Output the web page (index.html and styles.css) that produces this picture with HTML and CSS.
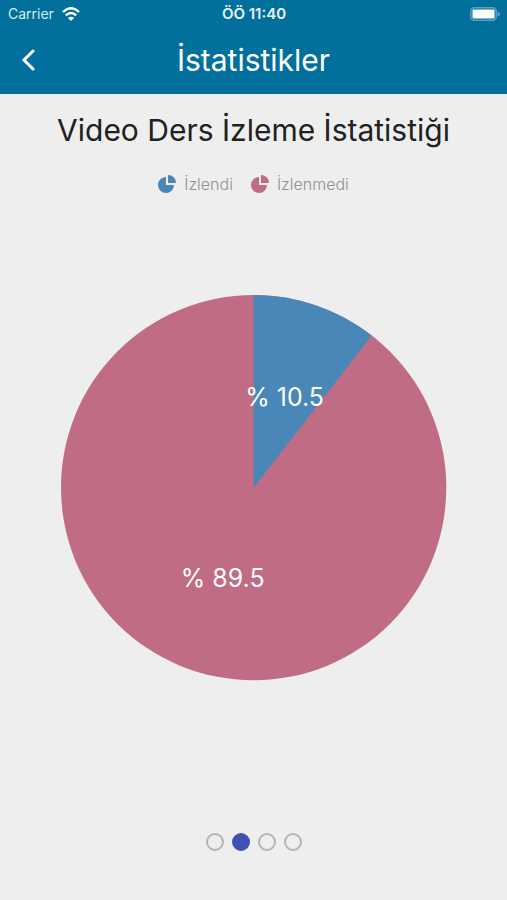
FILE: index.html
```html
<!DOCTYPE html>
<html lang="tr">
<head>
    <meta charset="UTF-8">
    <meta name="viewport" content="width=device-width, initial-scale=1.0">
    <title>İstatistikler</title>
    <link rel="stylesheet" href="styles.css">
</head>
<body>
    <header class="header">
        <div class="status-bar">
            <div class="carrier">
                <span>Carrier</span>
                <svg class="wifi" viewBox="0 0 18 14" aria-hidden="true">
                    <path d="M1 5 Q9 -2.6 17 5" />
                    <path d="M3.8 8.4 Q9 3.8 14.2 8.4" />
                    <path class="wifi-base" d="M9 14 L6 11 Q9 8.4 12 11 Z" />
                </svg>
            </div>
            <div class="clock">ÖÖ 11:40</div>
            <svg class="battery" viewBox="0 0 30 14" aria-hidden="true">
                <rect class="battery-case" x="0.8" y="0.8" width="25.4" height="12.4" rx="3.5" />
                <rect class="battery-level" x="2.5" y="2.5" width="22" height="9" rx="1" />
                <path class="battery-tip" d="M27.5 4.5 Q30 5.5 30 7 Q30 8.5 27.5 9.5 Z" />
            </svg>
        </div>
        <nav class="nav-bar">
            <button class="back-button" type="button" aria-label="Geri">
                <svg viewBox="0 0 14 22" aria-hidden="true">
                    <path d="M12 2 L3 11 L12 20" />
                </svg>
            </button>
            <h1 class="nav-title">İstatistikler</h1>
        </nav>
    </header>

    <main class="content">
        <h2 class="chart-title">Video Ders İzleme İstatistiği</h2>

        <ul class="legend">
            <li class="legend-item">
                <svg class="legend-icon watched" viewBox="0 0 18 18" aria-hidden="true">
                    <path d="M8 2 A8 8 0 1 0 16 10 L8 10 Z" />
                    <path d="M10 0 A8 8 0 0 1 18 8 L10 8 Z" />
                </svg>
                <span>İzlendi</span>
            </li>
            <li class="legend-item">
                <svg class="legend-icon unwatched" viewBox="0 0 18 18" aria-hidden="true">
                    <path d="M8 2 A8 8 0 1 0 16 10 L8 10 Z" />
                    <path d="M10 0 A8 8 0 0 1 18 8 L10 8 Z" />
                </svg>
                <span>İzlenmedi</span>
            </li>
        </ul>

        <!-- 10.5% of the circle is 37.8 degrees -->
        <svg class="pie" viewBox="-193 -193 386 386" role="img" aria-label="İzlendi % 10.5, İzlenmedi % 89.5">
            <circle class="unwatched" r="193" />
            <path class="watched" d="M0 0 V-193 A193 193 0 0 1 118.3 -152.5 Z" />
            <text class="pie-label" x="31" y="-82">% 10.5</text>
            <text class="pie-label" x="-31" y="100">% 89.5</text>
        </svg>

        <div class="pager">
            <button class="dot" type="button" aria-label="1"></button>
            <button class="dot active" type="button" aria-label="2" aria-current="true"></button>
            <button class="dot" type="button" aria-label="3"></button>
            <button class="dot" type="button" aria-label="4"></button>
        </div>
    </main>
</body>
</html>
```
FILE: styles.css
```css
* {
    box-sizing: border-box;
}
body {
    display: flex;
    flex-direction: column;
    min-height: 100vh;
    margin: 0;
    background-color: #eeeeee;
    color: #212121;
    font-family: Inter, "Liberation Sans", sans-serif;
}
h1, h2, ul {
    margin: 0;
    padding: 0;
    font-weight: 400;
}
button {
    padding: 0;
    border: none;
    background: none;
    cursor: pointer;
}
.header {
    background-color: #02709d;
    color: #fff;
}
.status-bar {
    display: grid;
    grid-template-columns: 1fr auto 1fr;
    align-items: center;
    height: 27px;
    padding: 0 7px 0 8px;
    font-size: 14px;
}
.carrier {
    display: flex;
    align-items: center;
    gap: 8px;
    color: #d9eaf1;
}
.wifi {
    width: 18px;
    height: 14px;
    fill: none;
    stroke: #fff;
    stroke-width: 2.4;
}
.wifi-base {
    fill: #fff;
    stroke: none;
}
.clock {
    font-size: 15px;
    font-weight: 600;
    color: #e8f3f7;
}
.battery {
    width: 30px;
    height: 14px;
    justify-self: end;
}
.battery-case {
    fill: none;
    stroke: #5aa2c0;
    stroke-width: 1.5;
}
.battery-level {
    fill: #fff;
}
.battery-tip {
    fill: #5aa2c0;
}
.nav-bar {
    display: grid;
    grid-template-columns: 56px 1fr 56px;
    align-items: center;
    height: 67px;
    padding-bottom: 2px;
}
.back-button {
    display: flex;
    align-items: center;
    justify-content: center;
    height: 56px;
}
.back-button svg {
    width: 14px;
    height: 22px;
    fill: none;
    stroke: #fff;
    stroke-width: 3;
    stroke-linecap: round;
}
.nav-title,
.chart-title {
    font-size: 30px;
    line-height: 32px;
    text-align: center;
}
.content {
    display: flex;
    flex: 1;
    flex-direction: column;
    align-items: center;
    padding: 20px 0 49px;
}
.legend {
    display: flex;
    gap: 18px;
    margin-top: 28px;
    list-style: none;
}
.legend-item {
    display: flex;
    align-items: center;
    gap: 8px;
    color: #929292;
    font-size: 16px;
    font-weight: 300;
    line-height: 20px;
}
.legend-icon {
    width: 18px;
    height: 18px;
}
.watched {
    fill: #4a87b9;
}
.unwatched {
    fill: #c06c84;
}
.pie {
    width: 76%;
    margin: 101px 0 48px;
    overflow: visible;
}
.pie-label {
    fill: #fff;
    font-size: 25px;
    text-anchor: middle;
}
.pager {
    display: flex;
    gap: 8px;
    margin-top: auto;
}
.dot {
    width: 18px;
    height: 18px;
    border: 2px solid #b4b4b4;
    border-radius: 50%;
}
.dot.active {
    border-color: #3f51b5;
    background-color: #3f51b5;
}
```
